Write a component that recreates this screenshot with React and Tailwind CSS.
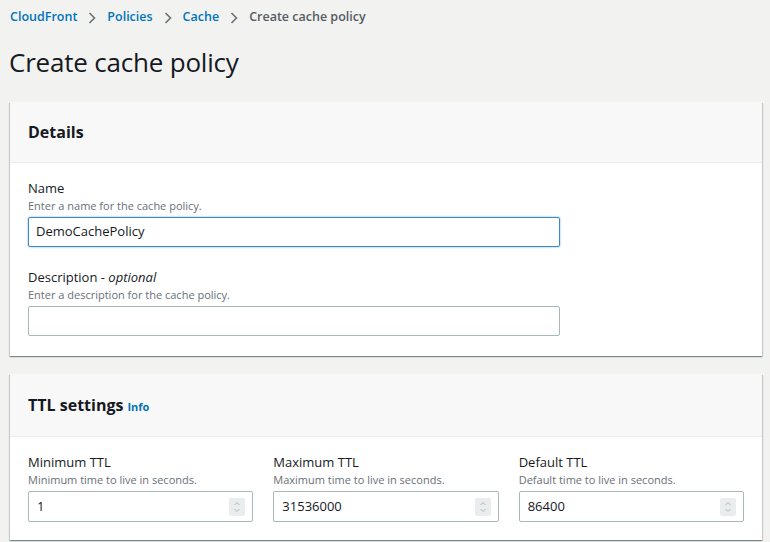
import React from 'react'

const font = { fontFamily: '"Open Sans", "Noto Sans", Arial, sans-serif' }

function Chevron() {
  return (
    <svg width="10" height="14" viewBox="0 0 10 14" className="mx-[10px]">
      <path d="M2.5 2 L7.5 7 L2.5 12" fill="none" stroke="#687078" strokeWidth="1.6" />
    </svg>
  )
}

function Stepper() {
  return (
    <div className="flex items-center justify-center w-[16px] h-[18px] bg-[#eaeded] rounded-[2px]">
      <svg width="8" height="14" viewBox="0 0 8 14">
        <path d="M1.5 5 L4 2.5 L6.5 5" fill="none" stroke="#aab7b8" strokeWidth="1" />
        <path d="M1.5 9 L4 11.5 L6.5 9" fill="none" stroke="#aab7b8" strokeWidth="1" />
      </svg>
    </div>
  )
}

function Card({ title, headerH, children }) {
  return (
    <div className="ml-[10px] mr-[8px] bg-white shadow-[0_1px_1px_0_rgba(0,28,36,0.3),1px_1px_1px_0_rgba(0,28,36,0.15),-1px_1px_1px_0_rgba(0,28,36,0.15)]">
      <div className={`${headerH} flex items-center px-[18px] bg-[#f8f8f8] border-b border-[#eaeded]`}>
        {title}
      </div>
      {children}
    </div>
  )
}

function NumberField({ label, hint, value }) {
  return (
    <div>
      <div className="text-[13px] leading-[20px] text-[#16191f]">{label}</div>
      <div className="text-[11px] leading-[16px] text-[#687078]">{hint}</div>
      <div className="mt-[3px] h-[31px] flex items-center justify-between pl-[8px] pr-[7px] border border-[#aab7b8] rounded-[2px] bg-white">
        <span className="text-[13px] text-[#16191f]">{value}</span>
        <Stepper />
      </div>
    </div>
  )
}

export default function App() {
  return (
    <div className="min-h-screen bg-[#f2f3f1] overflow-hidden" style={font}>
      {/* breadcrumbs */}
      <div className="flex items-center px-[10px] pt-[5px] h-[30px] text-[12.5px] font-semibold">
        <span className="text-[#0073bb]">CloudFront</span>
        <Chevron />
        <span className="text-[#0073bb]">Policies</span>
        <Chevron />
        <span className="text-[#0073bb]">Cache</span>
        <Chevron />
        <span className="text-[#545b64]">Create cache policy</span>
      </div>

      <h1 className="px-[9px] pt-[14px] pb-[22px] text-[26px] tracking-[-0.2px] leading-[36px] text-[#16191f]">Create cache policy</h1>

      <Card headerH="h-[61px]" title={<h2 className="text-[16px] font-bold text-[#16191f]">Details</h2>}>
        <div className="px-[18px] pt-[15px] pb-[20px]">
          <div className="text-[13px] leading-[20px] text-[#16191f]">Name</div>
          <div className="text-[11px] leading-[16px] text-[#687078]">Enter a name for the cache policy.</div>
          <div className="mt-[3px] w-[532px] h-[30px] flex items-center px-[7px] border border-[#3b8ad0] rounded-[2px] shadow-[0_0_2px_rgba(0,115,187,0.6)] text-[13px] text-[#16191f]">
            DemoCachePolicy
          </div>

          <div className="mt-[20px] text-[13px] leading-[20px] text-[#16191f]">
            Description - <i>optional</i>
          </div>
          <div className="text-[11px] leading-[16px] text-[#687078]">Enter a description for the cache policy.</div>
          <div className="mt-[3px] w-[532px] h-[30px] border border-[#aab7b8] rounded-[2px]" />
        </div>
      </Card>

      <div className="h-[18px]" />

      <Card
        headerH="h-[63px]"
        title={
          <h2 className="flex items-baseline gap-[4px] text-[16px] font-bold text-[#16191f]">
            TTL settings <span className="text-[11px] text-[#0073bb]">Info</span>
          </h2>
        }
      >
        <div className="grid grid-cols-3 gap-[20px] px-[18px] pt-[15px] pb-[18px]">
          <NumberField label="Minimum TTL" hint="Minimum time to live in seconds." value="1" />
          <NumberField label="Maximum TTL" hint="Maximum time to live in seconds." value="31536000" />
          <NumberField label="Default TTL" hint="Default time to live in seconds." value="86400" />
        </div>
      </Card>
    </div>
  )
}
